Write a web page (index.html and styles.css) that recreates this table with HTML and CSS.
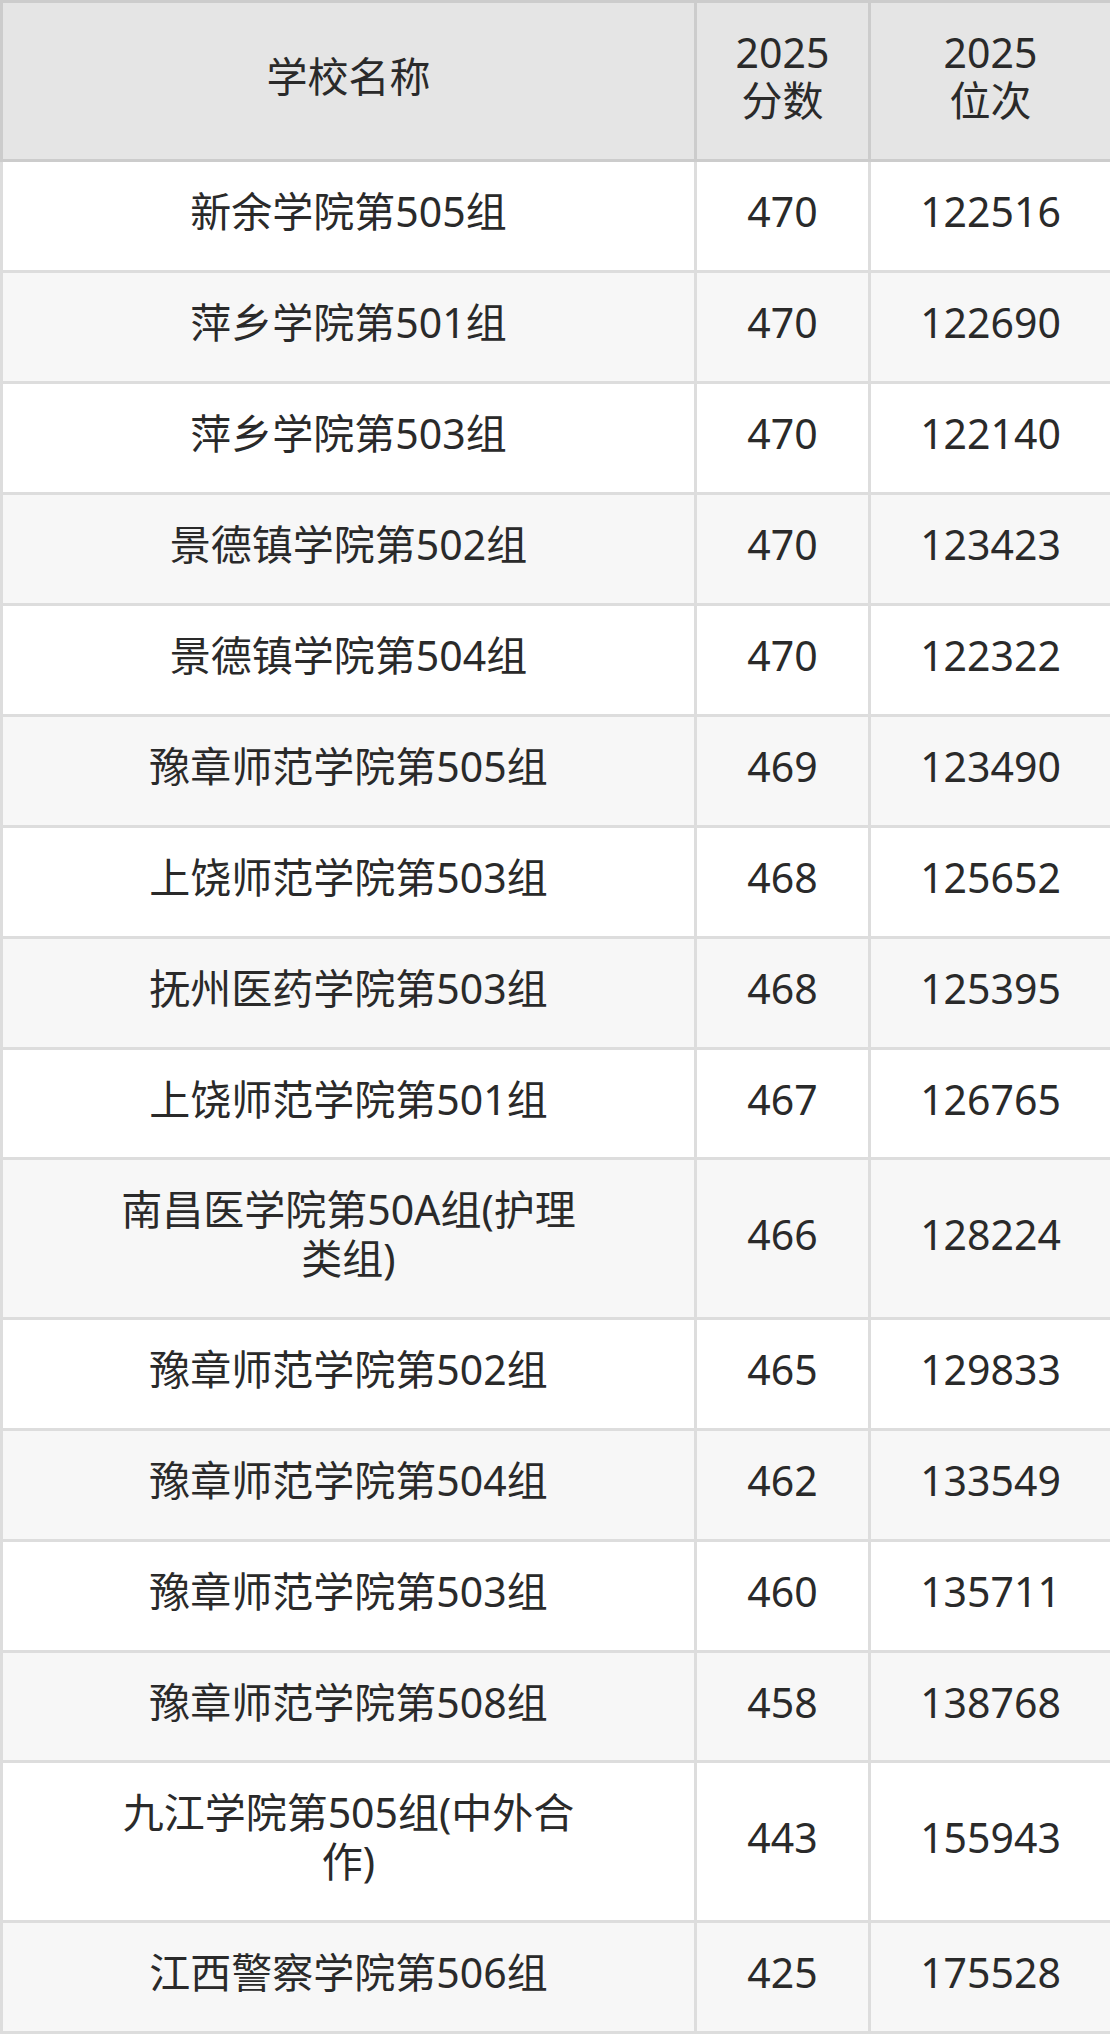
FILE: index.html
```html
<!DOCTYPE html>
<html lang="zh-CN">
<head>
<meta charset="utf-8">
<title>2025分数位次</title>
<link rel="stylesheet" href="styles.css">
</head>
<body>
<table class="score-table">
  <colgroup>
    <col class="col-name">
    <col class="col-score">
    <col class="col-rank">
  </colgroup>
  <thead>
    <tr>
      <th class="name">学校名称</th>
      <th>2025<br>分数</th>
      <th>2025<br>位次</th>
    </tr>
  </thead>
  <tbody>
    <tr><td class="name">新余学院第505组</td><td>470</td><td>122516</td></tr>
    <tr><td class="name">萍乡学院第501组</td><td>470</td><td>122690</td></tr>
    <tr><td class="name">萍乡学院第503组</td><td>470</td><td>122140</td></tr>
    <tr><td class="name">景德镇学院第502组</td><td>470</td><td>123423</td></tr>
    <tr><td class="name">景德镇学院第504组</td><td>470</td><td>122322</td></tr>
    <tr><td class="name">豫章师范学院第505组</td><td>469</td><td>123490</td></tr>
    <tr><td class="name">上饶师范学院第503组</td><td>468</td><td>125652</td></tr>
    <tr><td class="name">抚州医药学院第503组</td><td>468</td><td>125395</td></tr>
    <tr><td class="name">上饶师范学院第501组</td><td>467</td><td>126765</td></tr>
    <tr><td class="name">南昌医学院第50A组(护理类组)</td><td>466</td><td>128224</td></tr>
    <tr><td class="name">豫章师范学院第502组</td><td>465</td><td>129833</td></tr>
    <tr><td class="name">豫章师范学院第504组</td><td>462</td><td>133549</td></tr>
    <tr><td class="name">豫章师范学院第503组</td><td>460</td><td>135711</td></tr>
    <tr><td class="name">豫章师范学院第508组</td><td>458</td><td>138768</td></tr>
    <tr><td class="name">九江学院第505组(中外合作)</td><td>443</td><td>155943</td></tr>
    <tr><td class="name">江西警察学院第506组</td><td>425</td><td>175528</td></tr>
  </tbody>
</table>
</body>
</html>
```
FILE: styles.css
```css
html, body {
  margin: 0;
  padding: 0;
  background: #ffffff;
}

body {
  font-family: "Noto Sans", "Open Sans", "Noto Sans CJK SC", sans-serif;
  color: #2a2a2a;
}

.score-table {
  width: 1110px;
  border-collapse: collapse;
  table-layout: fixed;
  font-size: 41px;
  line-height: 48.4px;
}

.col-name { width: 694px; }
.col-score { width: 174px; }
.col-rank { width: 242px; }

.score-table th,
.score-table td {
  border: 3px solid #dddddd;
  padding: 25px 8px 34.5px;
  text-align: center;
  vertical-align: middle;
  font-weight: normal;
}

.score-table th.name,
.score-table td.name {
  padding-left: 104px;
  padding-right: 104px;
}

.score-table thead th {
  background: #e5e5e5;
  border-color: #cccccc;
}

.score-table tbody tr:nth-child(odd) td {
  background: #ffffff;
}

.score-table tbody tr:nth-child(even) td {
  background: #f7f7f7;
}
```
